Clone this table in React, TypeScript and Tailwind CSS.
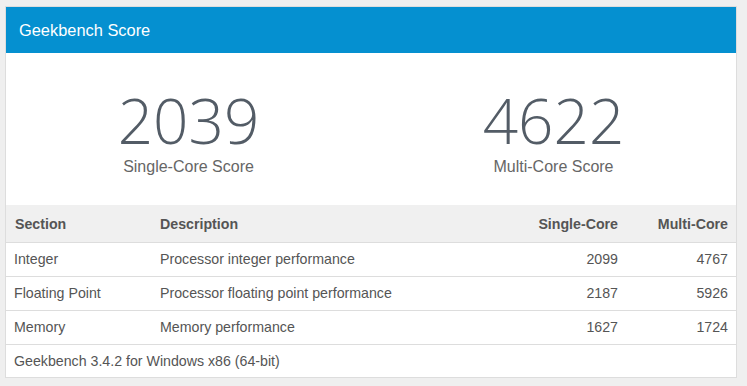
const rows = [
  { section: 'Integer', desc: 'Processor integer performance', single: 2099, multi: 4767 },
  { section: 'Floating Point', desc: 'Processor floating point performance', single: 2187, multi: 5926 },
  { section: 'Memory', desc: 'Memory performance', single: 1627, multi: 1724 },
];

export default function App() {
  return (
    <div className="w-[747px] h-[386px] bg-[#efefef] pt-[6px] pl-[5px] font-['Liberation_Sans',Arial,sans-serif]">
      <div className="w-[732px] bg-white border border-[#dddddd]">
        <div className="h-[46px] bg-[#0590d0] flex items-center pl-[13px] text-white text-[16.4px]">
          Geekbench Score
        </div>
        <div className="h-[152px] grid grid-cols-2">
          {[
            { score: 2039, label: 'Single-Core Score' },
            { score: 4622, label: 'Multi-Core Score' },
          ].map((s) => (
            <div key={s.label} className="flex flex-col items-center pt-[36px]">
              <div className="font-['Open_Sans',sans-serif] font-light text-[62px] leading-[62px] text-[#535c66]">
                {s.score}
              </div>
              <div className="text-[16px] leading-[18px] text-[#666] mt-[7px]">{s.label}</div>
            </div>
          ))}
        </div>
        <table className="w-full text-[14.2px] text-[#555] border-collapse">
          <thead>
            <tr className="bg-[#f0f0f0] h-[37px] border-b border-[#dddddd]">
              <th className="text-left font-bold pl-[9px] w-[154px] pt-[2px]">Section</th>
              <th className="text-left font-bold pt-[2px]">Description</th>
              <th className="text-right font-bold w-[120px] pt-[2px]">Single-Core</th>
              <th className="text-right font-bold pr-[8px] w-[118px] pt-[2px]">Multi-Core</th>
            </tr>
          </thead>
          <tbody>
            {rows.map((r) => (
              <tr key={r.section} className="h-[34px] border-b border-[#dddddd]">
                <td className="pl-[8px] pt-[1px]">{r.section}</td>
                <td className="pt-[1px]">{r.desc}</td>
                <td className="text-right pt-[1px]">{r.single}</td>
                <td className="text-right pr-[8px] pt-[1px]">{r.multi}</td>
              </tr>
            ))}
            <tr className="h-[33px]">
              <td colSpan={4} className="pl-[8px] pt-[1px]">Geekbench 3.4.2 for Windows x86 (64-bit)</td>
            </tr>
          </tbody>
        </table>
      </div>
    </div>
  );
}
